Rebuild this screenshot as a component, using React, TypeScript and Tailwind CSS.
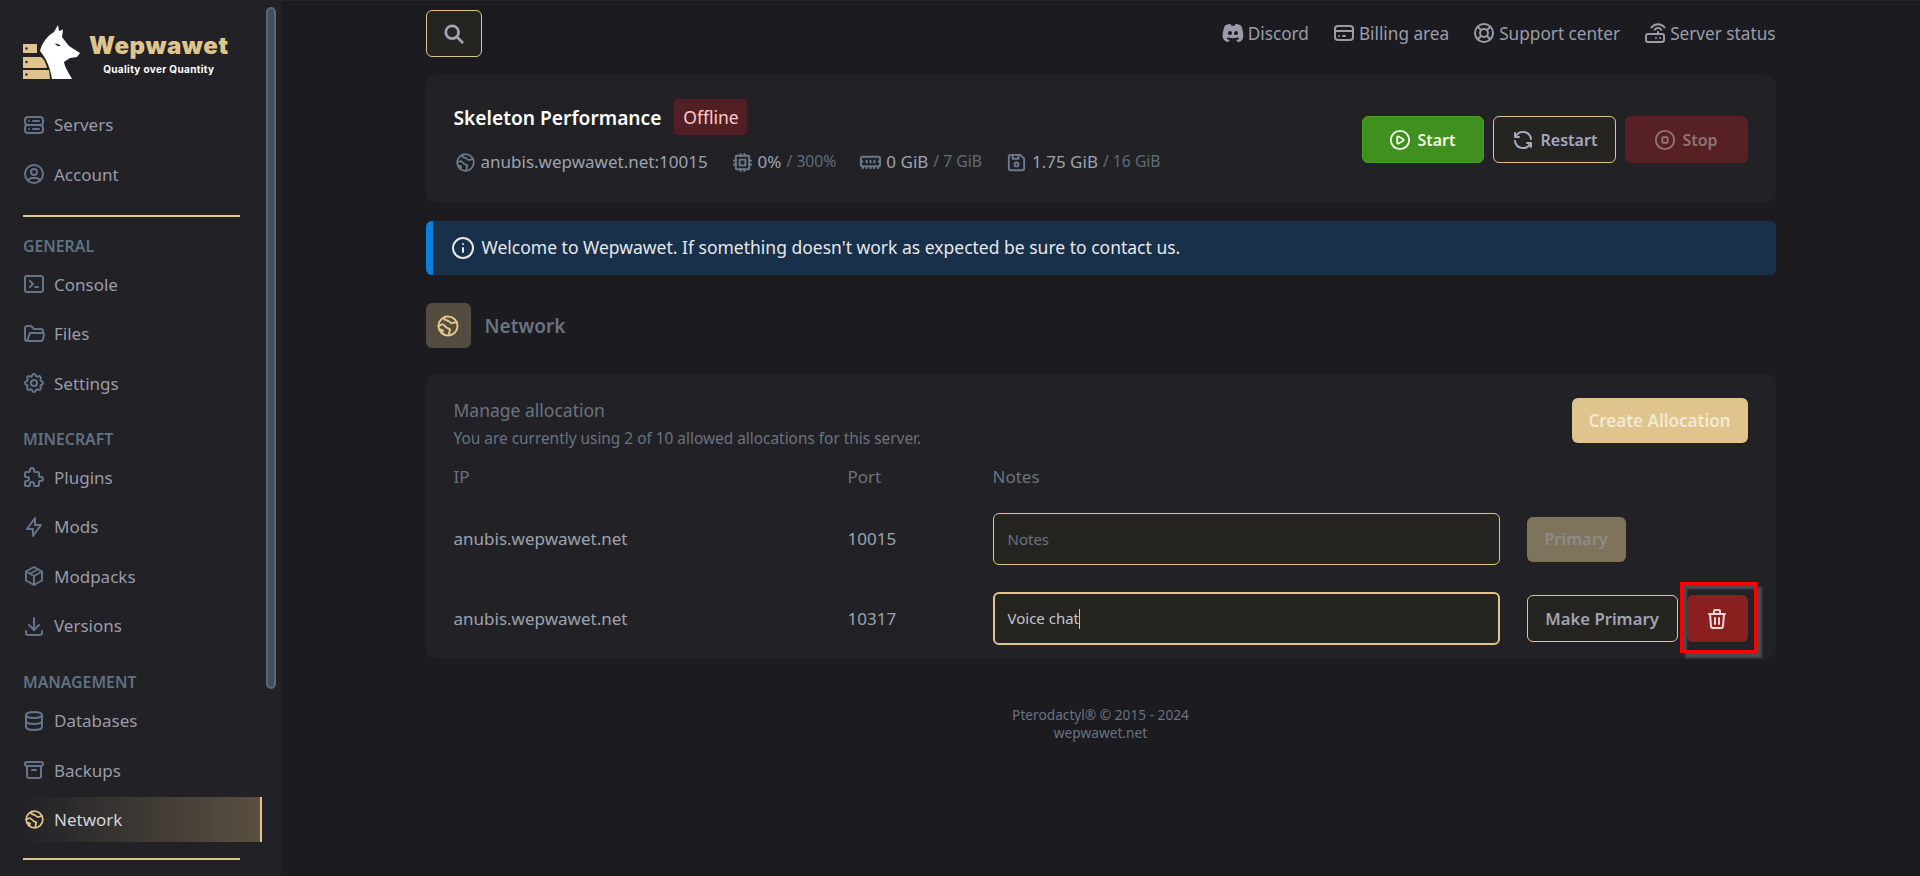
import type { ReactNode } from "react";
import {
  TbServer2, TbUserCircle, TbTerminal2, TbFolderOpen, TbSettings, TbPuzzle, TbBolt, TbPackage, TbDownload,
  TbDatabase, TbArchive, TbBrandDiscordFilled, TbCreditCard, TbLifebuoy, TbRouter, TbCpu, TbDeviceFloppy,
  TbRefresh, TbSearch, TbTrash,
} from "react-icons/tb";
import { CirclePlay, CircleStop, Info, MemoryStick } from "lucide-react";

const Globe = ({ size }: { size: number }) => (
  <svg viewBox="0 0 24 24" width={size} height={size} fill="none" stroke="currentColor" strokeWidth={2} strokeLinecap="round" strokeLinejoin="round">
    <circle cx="12" cy="12" r="9.500" />
    <path d="M9 2.700l-.7 2.600l4 1.700l3.400 2.300l5-1.300" />
    <path d="M2.500 12l3.800-1.700c1.700 0 2.700 2.400 4.400 3.400l3.300 1.600l-1 5" />
    <path d="M6 19.500l1-3l-3-1" />
  </svg>
);

const Logo = () => (
  <div className="flex h-[56px] shrink-0 items-start">
    <svg viewBox="23 24 58 56" className="h-[56px] w-[58px] shrink-0">
      <path fill="#dfc58d" d="M23 44h14v9H23zM23 57h18c3 2 5 6 6 11H23zM23 70h26l1 9H23z" />
      <path
        fill="#fff"
        d="M40 51C42 43 47 36 54 32L58 25L59 31L63 29.500L62 37L69 46L80 53L77 57L70 58L64 62C65 68 69 73 72 79L52 79C50 67 46 58 40 51Z"
      />
      <path fill="#212126" d="M55 43.500c2 0 4 .8 6 2.500c-2.500 .5-4.500 -.3-6-2.500z" />
      <g fill="#212126">
        <circle cx="26.500" cy="48.500" r="1.200" />
        <circle cx="26.500" cy="62" r="1.200" />
        <circle cx="26.500" cy="74.500" r="1.200" />
      </g>
    </svg>
    <div className="ml-[8px] flex flex-col items-center pt-[9px]">
      <span className="font-['Inter',sans-serif] text-[24px] leading-[26px] font-black tracking-[0.6px] text-[#dfc58d]">
        Wepwawet
      </span>
      <span className="mt-[4px] font-['Inter',sans-serif] text-[10px] leading-[12px] font-bold tracking-[0.35px] text-white">
        Quality over Quantity
      </span>
    </div>
  </div>
);

const NavItem = ({ icon, label, active }: { icon: ReactNode; label: string; active?: boolean }) => (
  <div
    className={
      active
        ? "mb-[4.5px] -ml-[6px] flex h-[45px] w-[245px] shrink-0 items-center gap-[8px] border-r-2 border-[#dfc58d] bg-gradient-to-r from-[#212126] to-[#5a5041] pl-[5px] text-[#d1d5db]"
        : "mb-[4.5px] -ml-[1px] flex h-[45px] shrink-0 items-center gap-[8px] text-[#9b9ba9]"
    }
  >
    <span className={active ? "flex w-[24px] justify-center text-[24px] text-[#dfc58d]" : "flex w-[24px] justify-center text-[24px] text-[#64748b]"}>{icon}</span>
    <span className="text-[17px] leading-none">{label}</span>
  </div>
);

const SectionLabel = ({ children, className }: { children: string; className: string }) => (
  <div className={"h-[20px] shrink-0 text-[15.8px] leading-[20px] font-semibold text-[#5f7284] uppercase " + className}>{children}</div>
);

const Sidebar = () => (
  <aside className="relative flex h-full w-[281px] shrink-0 flex-col overflow-hidden bg-[#212126] pt-[23px] pl-[23px]">
    <Logo />
    <div className="mt-[22px] flex flex-col">
      <NavItem icon={<TbServer2 />} label="Servers" />
      <NavItem icon={<TbUserCircle />} label="Account" />
    </div>
    <div className="mt-[14px] h-[2px] w-[217px] shrink-0 bg-[#dfc58d]" />
    <SectionLabel className="mt-[19px]">General</SectionLabel>
    <div className="mt-[5.5px] flex flex-col">
      <NavItem icon={<TbTerminal2 />} label="Console" />
      <NavItem icon={<TbFolderOpen />} label="Files" />
      <NavItem icon={<TbSettings />} label="Settings" />
    </div>
    <SectionLabel className="mt-[19px]">Minecraft</SectionLabel>
    <div className="mt-[5.5px] flex flex-col">
      <NavItem icon={<TbPuzzle />} label="Plugins" />
      <NavItem icon={<TbBolt />} label="Mods" />
      <NavItem icon={<TbPackage />} label="Modpacks" />
      <NavItem icon={<TbDownload />} label="Versions" />
    </div>
    <SectionLabel className="mt-[19px]">Management</SectionLabel>
    <div className="mt-[6.5px] flex flex-col">
      <NavItem icon={<TbDatabase />} label="Databases" />
      <NavItem icon={<TbArchive />} label="Backups" />
      <NavItem icon={<Globe size={21} />} label="Network" active />
    </div>
    <div className="mt-[11px] h-[2px] w-[217px] shrink-0 bg-[#dfc58d]" />
    {/* scrollbar thumb */}
    <div className="absolute top-[6px] left-[266px] h-[682px] w-[10px] rounded-[5px] border-2 border-[#566776] bg-[#3f4f5e]" />
  </aside>
);

const TopLink = ({ icon, label }: { icon: ReactNode; label: string }) => (
  <div className="flex items-center gap-[3px] text-[17.2px] text-[#9b9ba9]">
    <span className="text-[24px]">{icon}</span>
    <span className="pt-[1px]">{label}</span>
  </div>
);

const Stat = ({ icon, value, max }: { icon: ReactNode; value: string; max?: string }) => (
  <div className="flex items-center">
    <span className="mr-[4px] flex w-[23px] justify-center text-[23px] text-[#6b7a8c]">{icon}</span>
    <span className="text-[17px] text-[#9ca3af]">{value}</span>
    {max && <span className="ml-[5px] text-[15.7px] text-[#5f6b7a]">/ {max}</span>}
  </div>
);

const PowerButton = ({ icon, label, className }: { icon: ReactNode; label: string; className: string }) => (
  <button className={"flex h-[47px] items-center justify-center gap-[6px] rounded-[6px] text-[16px] font-semibold " + className}>
    {icon}
    {label}
  </button>
);

const ServerCard = () => (
  <div className="mt-[18px] flex h-[128px] items-start justify-between rounded-[10px] bg-[#222226] pt-[24px] pr-[28px] pl-[28px]">
    <div>
      <div className="flex h-[36px] items-center">
        <span className="pt-[2px] text-[19.2px] font-semibold text-white">Skeleton Performance</span>
        <span className="ml-[13px] flex h-[36px] w-[73px] items-center justify-center rounded-[4px] bg-[#522024] text-[17.5px] text-[#fecaca]">Offline</span>
      </div>
      <div className="mt-[15px] flex h-[24px] items-center gap-[23px]">
        <Stat icon={<Globe size={21} />} value="anubis.wepwawet.net:10015" />
        <Stat icon={<TbCpu />} value="0%" max="300%" />
        <Stat icon={<MemoryStick size={23} />} value="0 GiB" max="7 GiB" />
        <Stat icon={<TbDeviceFloppy />} value="1.75 GiB" max="16 GiB" />
      </div>
    </div>
    <div className="mt-[17px] flex gap-[9px]">
      <PowerButton icon={<CirclePlay size={22} />} label="Start" className="w-[122px] border border-[#4a9f24] bg-[#40901f] text-[#f0fde4]" />
      <PowerButton icon={<TbRefresh size={24} />} label="Restart" className="w-[123px] border border-[#dfc58d] bg-[#262420] text-[#a3a9c2]" />
      <PowerButton icon={<CircleStop size={22} />} label="Stop" className="w-[123px] bg-[#572123] text-[#8f7476]" />
    </div>
  </div>
);

const Alert = () => (
  <div className="mt-[18px] flex h-[54px] items-center rounded-[6px] border-l-[7px] border-[#0b7fdb] bg-[#18304a] pl-[18px] text-[17.5px] text-[#e5e7eb]">
    <Info size={24} className="mr-[7px]" />
    <span className="-mt-[1px]">Welcome to Wepwawet. If something doesn't work as expected be sure to contact us.</span>
  </div>
);

const AllocationRow = ({ port, notes, className }: { port: string; notes?: string; className: string }) => (
  <div className={"flex items-center text-[17px] text-[#9ca3af] " + className}>
    <span className="w-[394px] shrink-0">anubis.wepwawet.net</span>
    <span className="w-[145px] shrink-0">{port}</span>
    {notes ? (
      <div className="flex h-[53px] w-[507px] shrink-0 items-center rounded-[6px] border-2 border-[#dfc58d] bg-[#262420] pl-[13px] text-[15px] text-[#c0c4cc]">
        {notes}
        <span className="h-[20px] w-px bg-[#c0c4cc]" />
      </div>
    ) : (
      <div className="flex h-[52px] w-[507px] shrink-0 items-center rounded-[6px] border border-[#dfc58d] bg-[#262420] pl-[14px] text-[15px] text-[#6b7280]">
        Notes
      </div>
    )}
    {notes ? (
      <>
        <button className="ml-[27px] h-[47px] w-[151px] rounded-[6px] border border-[#dfc58d] bg-[#262420] text-[16.7px] font-semibold text-[#a3a3b5]">
          Make Primary
        </button>
        <div className="relative ml-[9px]">
          <button className="flex h-[47px] w-[61px] items-center justify-center rounded-[6px] bg-[#8a1f20] text-[#fbd5d5]">
            <TbTrash size={24} />
          </button>
          {/* annotation box drawn over the screenshot */}
          <div className="absolute -top-[13px] -right-[9px] -bottom-[11px] -left-[7px] border-[3px] border-[#ff0000] shadow-[5px_5px_2px_0_#4a4a4f,inset_4px_4px_2px_0_#4a4a4f]" />
        </div>
      </>
    ) : (
      <button className="ml-[27px] h-[45px] w-[99px] rounded-[6px] bg-[#7f735b] text-[16.5px] font-semibold text-[#8e8c88]">Primary</button>
    )}
  </div>
);

const AllocationCard = () => (
  <div className="mt-[26px] h-[285px] rounded-[10px] bg-[#222226] px-[28px]">
    <div className="flex items-start justify-between pt-[24px]">
      <div>
        <div className="text-[17.5px] leading-[24px] text-[#6b7280]">Manage allocation</div>
        <div className="mt-[7px] text-[15.4px] leading-[20px] text-[#6b7280]">You are currently using 2 of 10 allowed allocations for this server.</div>
      </div>
      <button className="h-[45px] w-[176px] rounded-[6px] bg-[#dfc58d] text-[17px] font-semibold text-[#f3e9d3]">Create Allocation</button>
    </div>
    <div className="mt-[16px] flex text-[17px] leading-[24px] text-[#6b7280]">
      <span className="w-[394px]">IP</span>
      <span className="w-[145px]">Port</span>
      <span>Notes</span>
    </div>
    <AllocationRow className="mt-[24px]" port="10015" />
    <AllocationRow className="mt-[27px]" port="10317" notes="Voice chat" />
  </div>
);

export default function App() {
  return (
    <div className="flex h-screen w-full overflow-hidden border-t border-[#20252a] bg-[#1b1b20] font-['Noto_Sans',sans-serif]">
      <Sidebar />
      <main className="h-full flex-1">
        <div className="mx-auto w-[1350px] pt-[9px]">
          <div className="flex items-center justify-between">
            <button className="flex h-[47px] w-[56px] items-center justify-center rounded-[6px] border border-[#dfc58d] bg-[#262420] text-[#a3a3b5]">
              <TbSearch size={22} strokeWidth={3} />
            </button>
            <div className="flex items-center gap-[23px]">
              <TopLink icon={<TbBrandDiscordFilled />} label="Discord" />
              <TopLink icon={<TbCreditCard />} label="Billing area" />
              <TopLink icon={<TbLifebuoy />} label="Support center" />
              <TopLink icon={<TbRouter />} label="Server status" />
            </div>
          </div>
          <ServerCard />
          <Alert />
          <div className="mt-[28px] flex items-center">
            <div className="flex h-[45px] w-[45px] items-center justify-center rounded-[6px] bg-[#544c3e] text-[#dfc58d]">
              <Globe size={24} />
            </div>
            <span className="ml-[14px] pt-[2px] text-[19px] font-semibold text-[#6b7280]">Network</span>
          </div>
          <AllocationCard />
          <div className="mt-[47px] text-center text-[13.7px] leading-[18px] text-[#6b7280]">
            <div>Pterodactyl® © 2015 - 2024</div>
            <div>wepwawet.net</div>
          </div>
        </div>
      </main>
    </div>
  );
}
